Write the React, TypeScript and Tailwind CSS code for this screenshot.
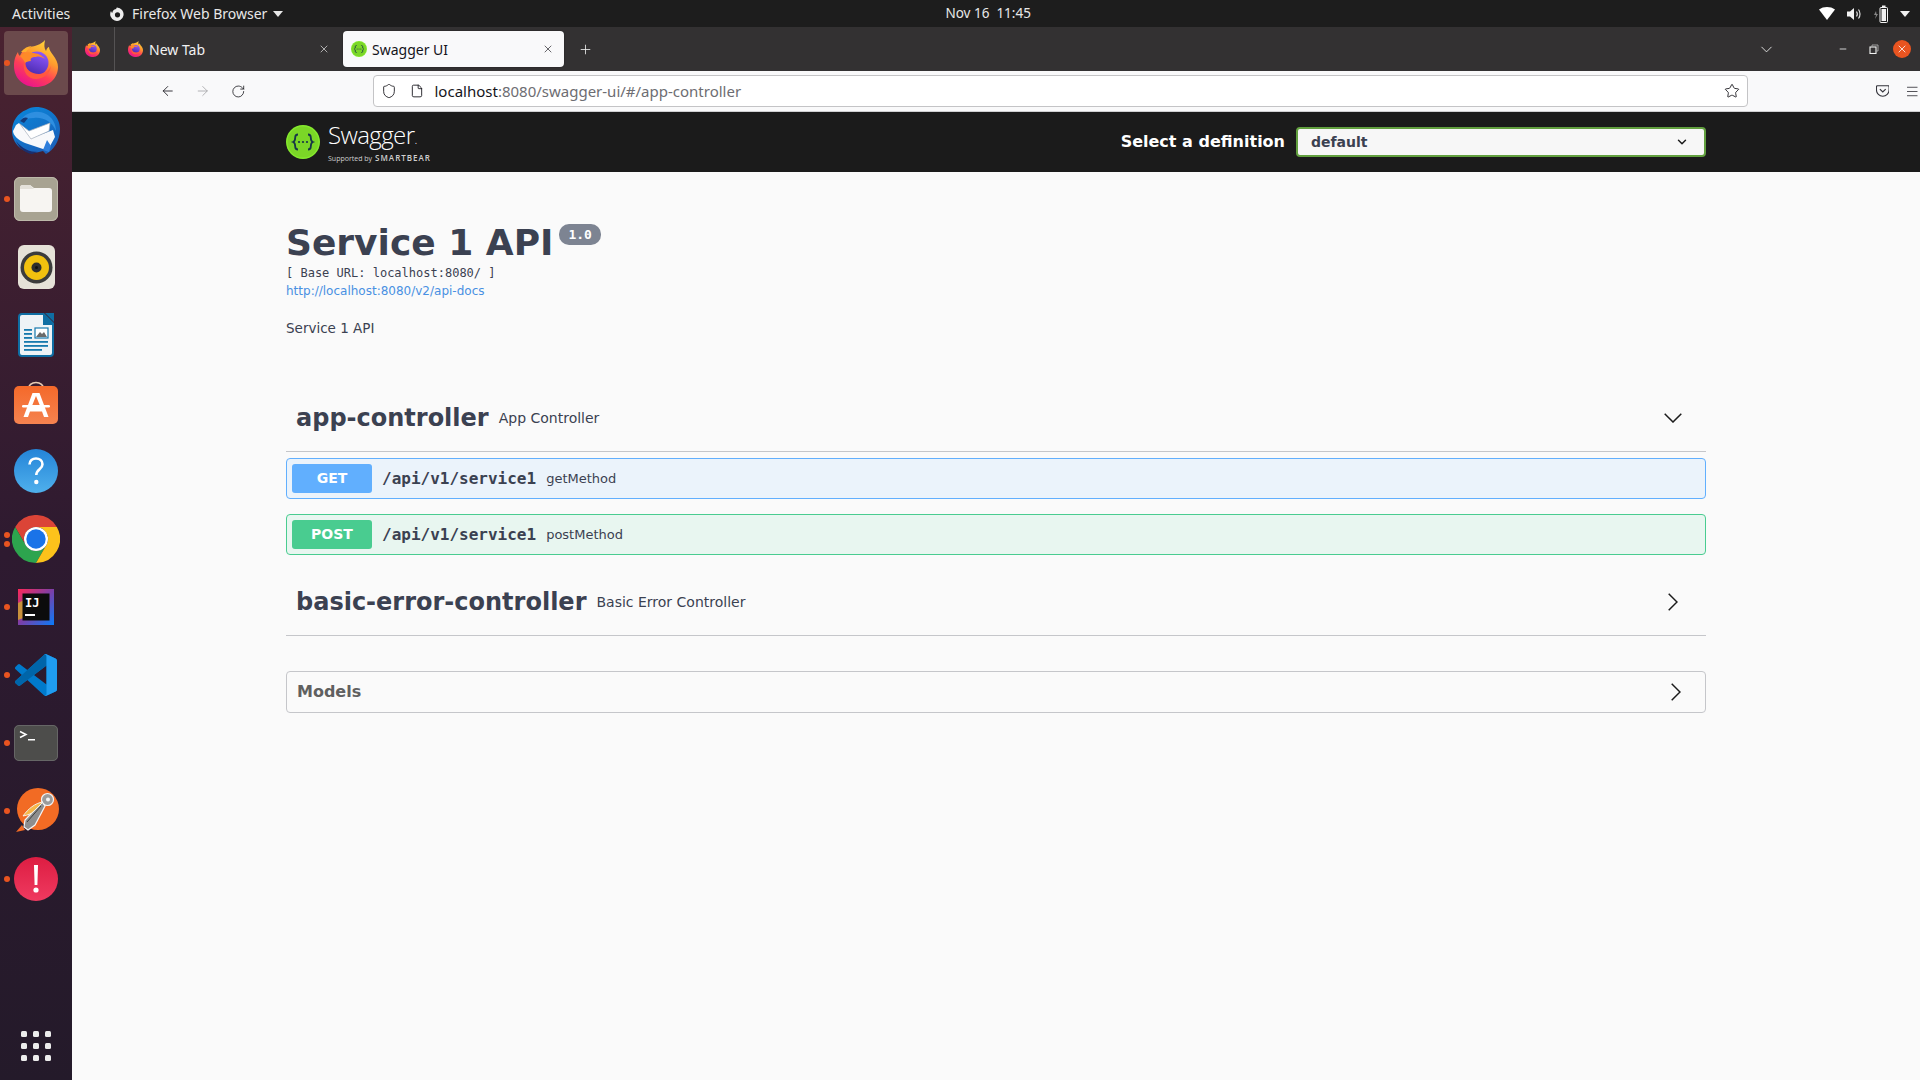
import React from "react";
import { ArrowLeft, ArrowRight, RotateCw, Shield, File, Star, Menu, ChevronDown, ChevronRight, Plus, X, Minus } from "lucide-react";

function Firefox({ size = 44, id = "a" }: { size?: number; id?: string }) {
  return (
    <svg width={size} height={size * 47 / 44} viewBox="0 0 44 47">
      <defs>
        <linearGradient id={id + "b"} x1="0.8" y1="0.05" x2="0.3" y2="1">
          <stop offset="0" stopColor="#ffd83a" />
          <stop offset="0.35" stopColor="#ff9a2e" />
          <stop offset="0.65" stopColor="#ff3f56" />
          <stop offset="1" stopColor="#e8128f" />
        </linearGradient>
        <linearGradient id={id + "p"} x1="0.7" y1="0" x2="0.3" y2="1">
          <stop offset="0" stopColor="#9059ff" />
          <stop offset="1" stopColor="#4a2bb0" />
        </linearGradient>
      </defs>
      <path d="M31 0c-1 5-1 8 1 11 1-3 2-4 3-4 0 3 2 5 4 8 3 4 5 8 5 12 0 11-9 20-22 20S0 38 0 26C0 19 2 15 4 12c0 2 1 3 2 4 2-6 7-8 11-9 3-1 10-2 14-7z" fill={`url(#${id}b)`} />
      <circle cx="23" cy="23" r="11.5" fill={`url(#${id}p)`} />
      <path d="M6 16c3-3 8-5 12-3 5 0 10 2 13 6-3-2-6-3-9-2-5 0-6 2-5 4-3 0-5 1-6 2-1-3-3-5-5-7z" fill="#ff8a28" />
      <path d="M10 21c1 8 7 13 15 13 6 0 10-3 12-8-1 8-8 13-15 13-8 0-14-7-12-18z" fill="#ff5a3c" opacity="0.95" />
      <path d="M7 12c3-4 7-6 11-6-3 2-5 4-6 6-2 0-4 0-5 0z" fill="#ffb02e" />
    </svg>
  );
}

function SwaggerMark({ size }: { size: number }) {
  return (
    <svg width={size} height={size} viewBox="0 0 34 34">
      <circle cx="17" cy="17" r="17" fill="#85ea2d" />
      <circle cx="17" cy="17" r="15.5" fill="#7bd627" />
      <path d="M12 9.5c-2.500 0-2.800 1.200-2.800 3 0 2.500-.3 3.800-2 4.500 1.700.7 2 2 2 4.500 0 1.800.3 3 2.800 3M22 9.500c2.500 0 2.800 1.200 2.800 3 0 2.500.3 3.800 2 4.500-1.700.7-2 2-2 4.500 0 1.800-.3 3-2.800 3" fill="none" stroke="#173647" strokeWidth="1.800" />
      <circle cx="13" cy="17" r="1.100" fill="#173647" />
      <circle cx="17" cy="17" r="1.100" fill="#173647" />
      <circle cx="21" cy="17" r="1.100" fill="#173647" />
    </svg>
  );
}

function Thunderbird() {
  return (
    <svg width="48" height="48" viewBox="0 0 48 48">
      <defs>
        <linearGradient id="tb" x1="0.2" y1="0" x2="0.8" y2="1">
          <stop offset="0" stopColor="#0a84d8" />
          <stop offset="1" stopColor="#1c5fb8" />
        </linearGradient>
      </defs>
      <path d="M24 0c14 0 24 10 24 22 0 11-6 21-14 25l-3-3-8 2C10 46 0 36 0 24 0 14 6 6 14 3c3-2 6-3 10-3z" fill="url(#tb)" />
      <path d="M8 14c5-8 16-12 26-7 6 3 10 10 10 17-4-9-12-14-22-13-6 0-10 2-14 3z" fill="#2f8fe0" />
      <path d="M8 14c3-4 6-4 8-3l-4 5z" fill="#123a7a" />
      <path d="M7 16 20 31l21-8 2 7-6 11-6 1-18-6C6 33 1 28 1 24l3-6z" fill="#f8f9fb" />
      <path d="M8 17 17 24l21-8-1 8-18 8z" fill="#ffffff" stroke="#a8b0bc" strokeWidth="0.700" />
      <path d="M4 34c6 8 14 11 22 11l-6 2C13 46 7 41 4 34z" fill="#1a2f6e" />
      <path d="M31 43l4-10 4 6-2 6z" fill="#2f7fdc" />
    </svg>
  );
}

function FilesIcon() {
  return (
    <svg width="44" height="44" viewBox="0 0 44 44">
      <rect width="44" height="44" rx="6" fill="#a8a392" />
      <rect x="0.500" y="0.500" width="43" height="43" rx="5.500" fill="none" stroke="#bdb9aa" />
      <path d="M6 11a3 3 0 0 1 3-3h7l4 3h15a3 3 0 0 1 3 3v18a3 3 0 0 1-3 3H9a3 3 0 0 1-3-3z" fill="#f7f5f2" />
      <path d="M6 12h14l-4-4H9a3 3 0 0 0-3 3z" fill="#e4e1da" />
    </svg>
  );
}

function Rhythmbox() {
  return (
    <svg width="37" height="44" viewBox="0 0 37 44">
      <rect width="37" height="44" rx="6" fill="#e6e2d8" />
      <circle cx="18.500" cy="22.500" r="16" fill="#3c3c3c" />
      <circle cx="18.500" cy="22.500" r="12.500" fill="#f2c10f" />
      <circle cx="18.500" cy="22.500" r="5" fill="#2e2e2e" />
      <circle cx="18.500" cy="22.500" r="1.500" fill="#111" />
    </svg>
  );
}

function Writer() {
  return (
    <svg width="36" height="44" viewBox="0 0 36 44">
      <path d="M4 0h22l10 10v30a4 4 0 0 1-4 4H4a4 4 0 0 1-4-4V4a4 4 0 0 1 4-4z" fill="#0f6ea3" />
      <path d="M4 2h21v10h9v28a2 2 0 0 1-2 2H4a2 2 0 0 1-2-2V4a2 2 0 0 1 2-2z" fill="#eef3f6" />
      <path d="M27 0l9 0v9z" fill="#0f6ea3" />
      <g fill="#1679ad">
        <rect x="6" y="16" width="8" height="1.800" />
        <rect x="6" y="20" width="8" height="1.800" />
        <rect x="6" y="24" width="8" height="1.800" />
        <rect x="6" y="28" width="24" height="1.800" />
        <rect x="6" y="32" width="24" height="1.800" />
        <rect x="6" y="36" width="18" height="1.800" />
      </g>
      <rect x="17" y="15" width="13" height="10" fill="#fff" stroke="#1679ad" strokeWidth="1.200" />
      <path d="M18 24l4-5 2 2 2-2 3 5z" fill="#6a6a6a" />
    </svg>
  );
}

function AppStore() {
  return (
    <svg width="44" height="44" viewBox="0 0 44 44">
      <defs>
        <linearGradient id="as" x1="0" y1="0" x2="0" y2="1">
          <stop offset="0" stopColor="#f4692a" />
          <stop offset="1" stopColor="#f58350" />
        </linearGradient>
      </defs>
      <path d="M14 9c0-10 16-10 16 0" fill="none" stroke="#e8cdb4" strokeWidth="1.600" />
      <rect y="5" width="44" height="38" rx="5" fill="url(#as)" />
      <path d="M18.500 12h7l9 24h-4.500l-2-5.500h-12L14 36H9.500zM22 15l-4.500 11h9z" fill="#fff" fillRule="evenodd" />
      <rect x="8" y="24" width="28" height="2.600" rx="1.300" fill="#fff" />
    </svg>
  );
}

function HelpIcon() {
  return (
    <svg width="44" height="44" viewBox="0 0 44 44">
      <defs>
        <linearGradient id="hp" x1="0" y1="0" x2="0" y2="1">
          <stop offset="0" stopColor="#2484d8" />
          <stop offset="1" stopColor="#4fb0ec" />
        </linearGradient>
      </defs>
      <circle cx="22" cy="22" r="22" fill="url(#hp)" />
      <path d="M15.500 15.500c0-4 3-6 6.500-6s6.500 2.200 6.500 5.800c0 5-6.200 5-6.200 10.700" fill="none" stroke="#fff" strokeWidth="2.600" />
      <circle cx="22.300" cy="33" r="2.200" fill="#fff" />
    </svg>
  );
}

function Chrome() {
  return (
    <svg width="48" height="48" viewBox="0 0 48 48">
      <path d="M44.800 12A24 24 0 0 0 3.200 12L13.600 30A12 12 0 0 1 24 12Z" fill="#db4437" />
      <path d="M3.200 12A24 24 0 0 0 24 48L34.400 30A12 12 0 0 1 13.600 30Z" fill="#2da44e" />
      <path d="M24 48A24 24 0 0 0 44.800 12L24 12A12 12 0 0 1 34.400 30Z" fill="#fcc21b" />
      <circle cx="24" cy="24" r="12" fill="#fff" />
      <circle cx="24" cy="24" r="9.700" fill="#1a73e8" />
    </svg>
  );
}

function IntelliJ() {
  return (
    <svg width="36" height="36" viewBox="0 0 36 36">
      <defs>
        <linearGradient id="ij" x1="0" y1="0" x2="1" y2="1">
          <stop offset="0" stopColor="#fe2857" />
          <stop offset="0.500" stopColor="#7b3fa8" />
          <stop offset="1" stopColor="#087cfa" />
        </linearGradient>
      </defs>
      <rect width="36" height="36" fill="url(#ij)" />
      <path d="M0 14 8 10v18l-8 3z" fill="#c9913c" />
      <rect x="4.500" y="4.500" width="27" height="27" fill="#0c0c0c" />
      <text x="7" y="18" fontFamily="'DejaVu Sans Mono', monospace" fontWeight="700" fontSize="12" fill="#fff">IJ</text>
      <rect x="7" y="25" width="10" height="2" fill="#fff" />
    </svg>
  );
}

function VSCode() {
  return (
    <svg width="42" height="42" viewBox="0 0 100 100">
      <path d="M70.900 99.300a6.200 6.200 0 0 0 5-.2l20.600-9.900a6.200 6.200 0 0 0 3.500-5.600V16.400a6.200 6.200 0 0 0-3.500-5.600L75.900.9a6.200 6.200 0 0 0-7.100 1.200L29.400 38 12.200 25a4.200 4.200 0 0 0-5.300.2L1.400 30.300a4.200 4.200 0 0 0 0 6.200L16.300 50 1.400 63.500a4.200 4.200 0 0 0 0 6.200l5.500 5a4.200 4.200 0 0 0 5.300.2L29.400 62l39.400 36a6.200 6.200 0 0 0 2.100 1.300zM75 27.300 45.100 50 75 72.700z" fill="#007acc" fillRule="evenodd" />
      <path d="M75 4.700V27.300L12.200 75a4.200 4.200 0 0 1-5.300-.2l-5.500-5a4.200 4.200 0 0 1 0-6.200L68.800 2.100c2.300-2.300 6.200-.7 6.200 2.600z" fill="#0065a9" />
      <path d="M68.800 2.100a6.200 6.200 0 0 1 7.100-1.200l20.600 9.900a6.200 6.200 0 0 1 3.500 5.600v67.200a6.200 6.200 0 0 1-3.500 5.600l-20.600 9.900a6.200 6.200 0 0 1-7.100-1.200c2.300 2.300 6.200.7 6.200-2.600V4.700c0-3.300-3.900-4.900-6.200-2.600z" fill="#1f9cf0" />
    </svg>
  );
}

function Terminal() {
  return (
    <svg width="44" height="36" viewBox="0 0 44 36">
      <rect width="44" height="36" rx="5" fill="#4d4d4b" />
      <rect x="0.500" y="0.500" width="43" height="35" rx="4.500" fill="none" stroke="#666" />
      <path d="M6 6.500 12 9.500 6 12.500" fill="none" stroke="#fff" strokeWidth="1.500" />
      <rect x="14" y="14" width="7" height="1.500" fill="#fff" />
    </svg>
  );
}

function Postman() {
  return (
    <svg width="46" height="46" viewBox="0 0 46 46">
      <circle cx="25" cy="21" r="21" fill="#f26b24" />
      <path d="M3 44l9-2-3-5z" fill="#f26b24" />
      <circle cx="34.500" cy="11.500" r="6" fill="#9b9b9b" stroke="#f4f4f4" strokeWidth="1.200" />
      <circle cx="35" cy="11.500" r="2" fill="#f4f4f4" />
      <path d="M29 14 12 32l-1 7 4 3 7-5 10-19z" fill="#8e8e8e" stroke="#f4f4f4" strokeWidth="1.200" />
      <path d="M30 14c-8 1-15 7-20 14 5-1 8-2 11-5z" fill="#f6b84a" stroke="#f4f4f4" strokeWidth="0.900" />
      <path d="M14 34l14-16" stroke="#3e3e3e" strokeWidth="1" />
    </svg>
  );
}

function ErrorIcon() {
  return (
    <svg width="44" height="44" viewBox="0 0 44 44">
      <defs>
        <linearGradient id="er" x1="0" y1="0" x2="0" y2="1">
          <stop offset="0" stopColor="#dd1d42" />
          <stop offset="1" stopColor="#ef3a60" />
        </linearGradient>
      </defs>
      <circle cx="22" cy="22" r="22" fill="url(#er)" />
      <path d="M20 8h4l-.6 20h-2.800z" fill="#fff" />
      <circle cx="22" cy="33" r="2.600" fill="#fff" />
    </svg>
  );
}

function DockItem({ children, dots = 0, active = false }: { children: React.ReactNode; dots?: number; active?: boolean }) {
  return (
    <div className="relative flex h-[68px] w-[72px] shrink-0 items-center justify-center">
      {active && <div className="absolute left-[4px] top-[2px] h-[64px] w-[64px] rounded-[4px] bg-[#6b4a4c]" />}
      {dots > 0 && (
        <div className="absolute left-[4px] top-0 flex h-full flex-col justify-center gap-[3px]">
          {Array.from({ length: dots }).map((_, i) => (
            <span key={i} className="h-[6px] w-[6px] rounded-full bg-[#e95420]" />
          ))}
        </div>
      )}
      <div className="relative flex">{children}</div>
    </div>
  );
}

function Dock() {
  return (
    <aside className="flex w-[72px] shrink-0 flex-col bg-gradient-to-b from-[#4a2230] via-[#2e1a30] to-[#241a2a] pt-[2px]">
      <DockItem dots={1} active><Firefox id="d" /></DockItem>
      <DockItem><Thunderbird /></DockItem>
      <DockItem dots={1}><FilesIcon /></DockItem>
      <DockItem><Rhythmbox /></DockItem>
      <DockItem><Writer /></DockItem>
      <DockItem><AppStore /></DockItem>
      <DockItem><HelpIcon /></DockItem>
      <DockItem dots={2}><Chrome /></DockItem>
      <DockItem dots={1}><IntelliJ /></DockItem>
      <DockItem dots={1}><VSCode /></DockItem>
      <DockItem dots={1}><Terminal /></DockItem>
      <DockItem dots={1}><Postman /></DockItem>
      <DockItem dots={1}><ErrorIcon /></DockItem>
      <div className="mt-auto flex h-[68px] items-center justify-center">
        <div className="grid grid-cols-3 gap-[6px]">
          {Array.from({ length: 9 }).map((_, i) => (
            <span key={i} className="h-[6px] w-[6px] rounded-[1.500px] bg-[#ececec]" />
          ))}
        </div>
      </div>
    </aside>
  );
}

function TopBar() {
  return (
    <header className="flex h-[27px] shrink-0 items-center bg-[#1d1d1d] font-['Noto_Sans',sans-serif] text-[14px] text-[#e8e8e8]">
      <span className="ml-[12px] w-[97px]">Activities</span>
      <svg width="16" height="16" viewBox="0 0 16 16">
        <path d="M8 1.500A6.700 6.700 0 1 1 2 5c.3 1 .7 1.500 1.200 1.900C3.700 4.500 5.400 3 7.500 3 6.800 2.500 7.300 1.800 8 1.500z" fill="#eee" />
        <circle cx="8.500" cy="8.800" r="2.600" fill="#1d1d1d" />
      </svg>
      <span className="ml-[7px]">Firefox Web Browser</span>
      <svg className="ml-[6px]" width="10" height="6" viewBox="0 0 10 6"><path d="M0 0h10L5 6z" fill="#e8e8e8" /></svg>
      <span className="ml-[662px] whitespace-pre text-[13.500px]">Nov 16  11:45</span>
      <div className="ml-auto flex items-center pr-[10px]">
        <svg width="16" height="13" viewBox="0 0 16 13"><path d="M0 2.500C4.500-.8 11.500-.8 16 2.500L8 13z" fill="#fff" /></svg>
        <svg className="ml-[12px]" width="15" height="14" viewBox="0 0 15 14">
          <path d="M0 4.500h3L7 1v12L3 9.500H0z" fill="#f2f2f2" />
          <path d="M9.500 4.500c1 1.500 1 3.500 0 5M11.500 2.500c2 2.500 2 6.500 0 9" fill="none" stroke="#ddd" strokeWidth="1.200" />
        </svg>
        <svg className="ml-[12px]" width="14" height="18" viewBox="0 0 14 18">
          <path d="M2 6 0 10h2l-1 4 3-5H2.500z" fill="#888" />
          <rect x="6" y="2.500" width="7.500" height="15" rx="1" fill="none" stroke="#f2f2f2" />
          <rect x="8" y="0.500" width="3.500" height="2" fill="#f2f2f2" />
          <rect x="7.500" y="4" width="4.500" height="12" fill="#f2f2f2" />
        </svg>
        <svg className="ml-[12px]" width="10" height="6" viewBox="0 0 10 6"><path d="M0 0h10L5 6z" fill="#f2f2f2" /></svg>
      </div>
    </header>
  );
}

function TabBar() {
  return (
    <div className="flex h-[44px] shrink-0 items-center bg-[#333132] font-['Noto_Sans',sans-serif] text-[14px] text-[#f2f2f2]">
      <div className="flex h-full w-[43px] items-center justify-center border-r border-[#555354] pr-[2px]">
        <Firefox size={15} id="t1" />
      </div>
      <div className="flex h-[36px] w-[229px] items-center pl-[13px]">
        <Firefox size={15} id="t2" />
        <span className="ml-[6px]">New Tab</span>
        <X className="ml-auto mr-[14px]" size={12} strokeWidth={1.300} />
      </div>
      <div className="ml-[-1px] flex h-[36px] w-[221px] items-center rounded-[4px] bg-[#f9f9fa] pl-[8px] text-[#15141a] shadow-[0_0_2px_rgba(0,0,0,0.4)]">
        <SwaggerMark size={16} />
        <span className="ml-[5px]">Swagger UI</span>
        <X className="ml-auto mr-[10px]" size={12} strokeWidth={1.300} />
      </div>
      <Plus className="ml-[14px]" size={15} strokeWidth={1.300} />
      <div className="ml-auto flex items-center">
        <ChevronDown className="mr-[62px]" size={19} strokeWidth={1.100} />
        <Minus className="mr-[21px]" size={10} strokeWidth={2} />
        <svg className="mr-[14px]" width="10" height="10" viewBox="0 0 10 10">
          <rect x="1" y="3" width="6" height="6.500" fill="none" stroke="#f2f2f2" strokeWidth="1.100" />
          <path d="M3 3V1h6v6H7" fill="none" stroke="#aaa" strokeWidth="0.900" />
        </svg>
        <div className="mr-[9px] flex h-[18px] w-[18px] items-center justify-center rounded-full bg-[#e95420]">
          <X size={12} strokeWidth={1.600} color="#fff" />
        </div>
      </div>
    </div>
  );
}

function NavBar() {
  return (
    <div className="flex h-[41px] shrink-0 items-center border-b border-[#cfcfd1] bg-[#f9f9fa] text-[#15141a]">
      <ArrowLeft className="ml-[88px]" size={16} strokeWidth={1.300} />
      <ArrowRight className="ml-[20px] text-[#a5a5a8]" size={16} strokeWidth={1.300} />
      <RotateCw className="ml-[20px]" size={15} strokeWidth={1.300} />
      <div className="ml-[128px] flex h-[32px] w-[1420px] items-center rounded-[4px] border border-[#c4c4c6] bg-white font-['Noto_Sans',sans-serif]">
        <Shield className="ml-[7px]" size={16} strokeWidth={1.300} />
        <File className="ml-[13px]" size={14} strokeWidth={1.500} />
        <span className="ml-[10px] text-[15px] text-[#15141a]">localhost<span className="text-[#6d6d72]">:8080/swagger-ui/#/app-controller</span></span>
        <Star className="ml-auto mr-[7px]" size={16} strokeWidth={1.300} />
      </div>
      <svg className="ml-[128px]" width="14" height="14" viewBox="0 0 14 14">
        <path d="M1.500 1.500h11a1 1 0 0 1 1 1V6a6.500 6.500 0 0 1-13 0V2.500a1 1 0 0 1 1-1z" fill="none" stroke="#33333a" strokeWidth="1.100" />
        <path d="M4 5l3 3 3-3" fill="none" stroke="#33333a" strokeWidth="1.200" />
      </svg>
      <Menu className="ml-[16px]" size={15} strokeWidth={1.200} />
    </div>
  );
}

function SwaggerBar() {
  return (
    <div className="flex h-[60px] shrink-0 items-center justify-center bg-[#1b1b1b]">
      <div className="flex w-[1420px] items-center font-['DejaVu_Sans',sans-serif]">
        <SwaggerMark size={34} />
        <div className="ml-[8px] flex flex-col text-white">
          <span className="font-['Open_Sans',sans-serif] text-[24px] leading-[26px] font-light tracking-[-0.600px]">Swagger<span className="text-[12px]">.</span></span>
          <span className="mt-[1px] flex items-baseline font-['Open_Sans',sans-serif] text-[7px] leading-[8px] text-[#cfcfcf]">
            Supported by <span className="ml-[3px] text-[8px] font-semibold tracking-[1px]">SMARTBEAR</span>
          </span>
        </div>
        <span className="ml-auto text-[16px] font-bold text-white">Select a definition</span>
        <div className="ml-[11px] flex h-[30px] w-[410px] items-center rounded-[4px] border-2 border-[#62a03f] bg-[#f7f7f7] pl-[13px] pr-[15px] text-[14px] font-bold text-[#3b4151]">
          default
          <ChevronDown className="ml-auto text-[#1b1b1b]" size={14} strokeWidth={2.500} />
        </div>
      </div>
    </div>
  );
}

function OpBlock({ method, summary, badge, border, bg }: { method: string; summary: string; badge: string; border: string; bg: string }) {
  return (
    <div className={`flex h-[41px] items-center rounded-[4px] border px-[5px] ${border} ${bg}`}>
      <span className={`flex h-[29px] w-[80px] items-center justify-center rounded-[3px] text-[14px] font-bold text-white ${badge}`}>{method}</span>
      <span className="ml-[10px] font-['DejaVu_Sans_Mono',monospace] text-[16px] font-bold text-[#3b4151]">/api/v1/service1</span>
      <span className="ml-[10px] text-[13px] text-[#3b4151]">{summary}</span>
    </div>
  );
}

function SectionHead({ name, desc, open }: { name: string; desc: string; open?: boolean }) {
  return (
    <div className="flex h-[67px] items-center border-b border-[#c5c6ca] pl-[10px] pr-[24px]">
      <h3 className="text-[24px] font-bold text-[#3b4151]">{name}</h3>
      <span className="ml-[10px] text-[14px] text-[#3b4151]">{desc}</span>
      {open ? (
        <svg className="ml-auto" width="18" height="10" viewBox="0 0 18 10"><path d="M.700.700 9 9 17.300.700" fill="none" stroke="#1b1b1b" strokeWidth="1.500" /></svg>
      ) : (
        <svg className="ml-auto mr-[4px]" width="10" height="18" viewBox="0 0 10 18"><path d="M.700.700 9 9 .700 17.300" fill="none" stroke="#1b1b1b" strokeWidth="1.500" /></svg>
      )}
    </div>
  );
}

function SwaggerContent() {
  return (
    <main className="min-h-0 flex-1 bg-[#fafafa] font-['DejaVu_Sans',sans-serif]">
      <div className="mx-auto w-[1420px]">
        <div className="flex items-start pt-[49px]">
          <h2 className="text-[36px] leading-[43px] font-bold text-[#3b4151]">Service 1 API</h2>
          <span className="ml-[6px] mt-[3px] rounded-[10px] bg-[#7d8492] px-[9px] font-['DejaVu_Sans_Mono',monospace] text-[13px] leading-[21px] font-bold text-white">1.0</span>
        </div>
        <div className="font-['DejaVu_Sans_Mono',monospace] text-[12px] leading-[18px] text-[#3b4151]">[ Base URL: localhost:8080/ ]</div>
        <div className="text-[12px] leading-[18px] text-[#4990e2]">http://localhost:8080/v2/api-docs</div>
        <p className="mt-[19px] text-[13.500px] leading-[18px] text-[#3b4151]">Service 1 API</p>
        <div className="mt-[48px]">
          <SectionHead name="app-controller" desc="App Controller" open />
        </div>
        <div className="mt-[6px] flex flex-col gap-[15px]">
          <OpBlock method="GET" summary="getMethod" badge="bg-[#61affe]" border="border-[#61affe]" bg="bg-[#ebf3fb]" />
          <OpBlock method="POST" summary="postMethod" badge="bg-[#49cc90]" border="border-[#49cc90]" bg="bg-[#e8f6f0]" />
        </div>
        <div className="mt-[14px]">
          <SectionHead name="basic-error-controller" desc="Basic Error Controller" />
        </div>
        <div className="mt-[35px] flex h-[42px] items-center rounded-[4px] border border-[#c5c6ca] pl-[10px] pr-[24px]">
          <span className="text-[16px] font-bold text-[#606060]">Models</span>
          <svg className="ml-auto" width="10" height="18" viewBox="0 0 10 18"><path d="M.700.700 9 9 .700 17.300" fill="none" stroke="#1b1b1b" strokeWidth="1.500" /></svg>
        </div>
      </div>
    </main>
  );
}

export default function App() {
  return (
    <div className="flex h-[1080px] w-[1920px] flex-col overflow-hidden bg-[#fafafa]">
      <TopBar />
      <div className="flex min-h-0 flex-1">
        <Dock />
        <div className="flex min-w-0 flex-1 flex-col">
          <TabBar />
          <NavBar />
          <SwaggerBar />
          <SwaggerContent />
        </div>
      </div>
    </div>
  );
}
